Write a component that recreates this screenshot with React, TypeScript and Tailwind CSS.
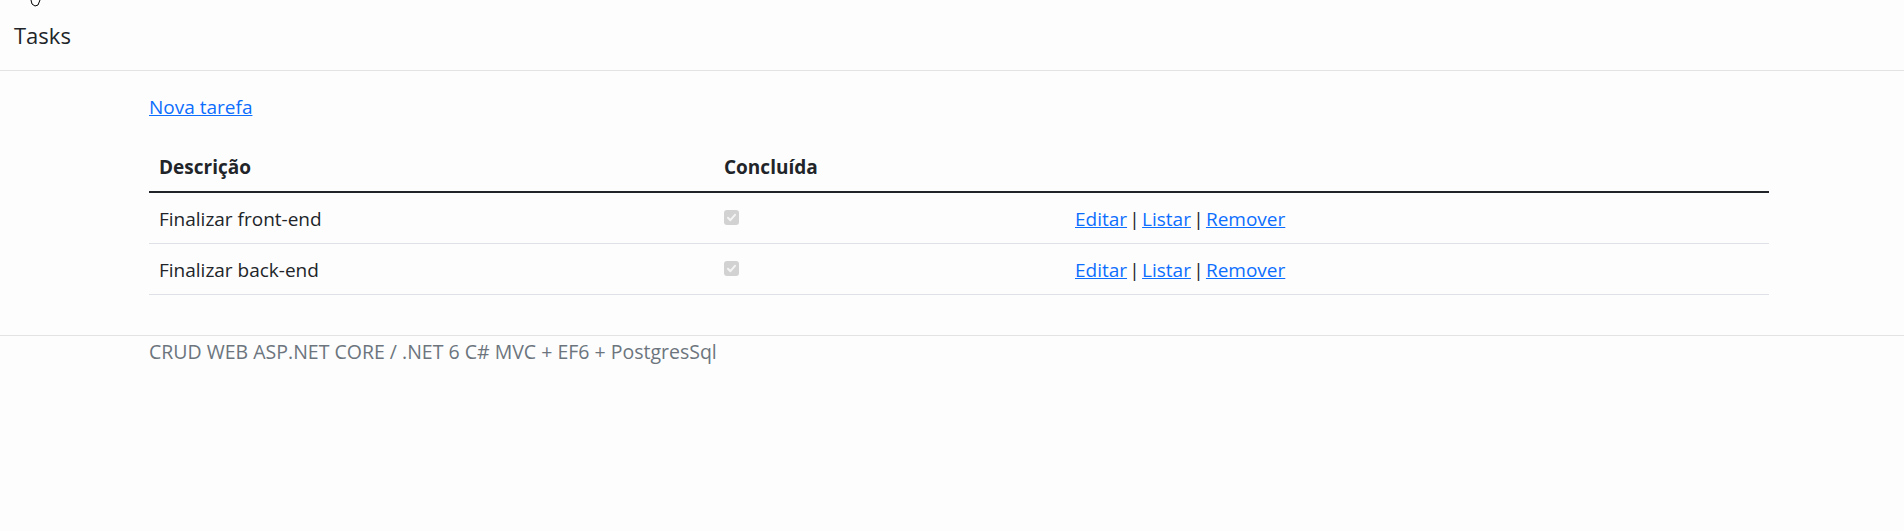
import React from "react";

const font = { fontFamily: '"Segoe UI", "Open Sans", "Noto Sans", sans-serif' };

function Check() {
  return (
    <div className="mt-[6px] flex h-[15px] w-[15px] items-center justify-center rounded-[3px] bg-[#d2d2d2]">
      <svg width="11" height="11" viewBox="0 0 11 11">
        <path d="M2 5.8 L4.4 8.2 L9 2.8" fill="none" stroke="#f4f4f4" strokeWidth="2" strokeLinecap="round" strokeLinejoin="round" />
      </svg>
    </div>
  );
}

function Sep() {
  return <span className="inline-block w-[15px] text-center text-[#212529]">|</span>;
}

function Actions() {
  return (
    <span>
      <a href="#" className="text-[#0d6efd] underline">Editar</a>
      <Sep />
      <a href="#" className="text-[#0d6efd] underline">Listar</a>
      <Sep />
      <a href="#" className="text-[#0d6efd] underline">Remover</a>
    </span>
  );
}

const rows = ["Finalizar front-end", "Finalizar back-end"];

export default function App() {
  return (
    <div className="relative min-h-[531px] bg-[#fdfdfd] text-[19px] leading-[30px] text-[#212529]" style={font}>
      <svg className="absolute left-[28px] top-0" width="16" height="8" viewBox="0 0 16 8">
        <path d="M3 0 L4 4 L7 6 L10 5 L12 0" fill="#fff" stroke="#000" strokeWidth="1" />
      </svg>
      <header className="flex h-[71px] items-center border-b border-[#e3e3e3] pl-[14px]">
        <span className="text-[22px] leading-[30px] text-[#212529]">Tasks</span>
      </header>
      <main className="pl-[149px] pt-[21px] pb-[20px]">
        <div className="w-[1620px]">
          <p className="mb-[19px]">
            <a href="#" className="text-[#0d6efd] underline">Nova tarefa</a>
          </p>
          <div className="mb-[20px]">
            <div className="flex border-b-[2.5px] border-[#212529] font-bold">
              <div className="w-[565px] px-[10px] pt-[11px] pb-[9px]">Descrição</div>
              <div className="w-[351px] px-[10px] pt-[11px] pb-[9px]">Concluída</div>
              <div className="flex-1 px-[10px] pt-[11px] pb-[9px]"></div>
            </div>
            {rows.map((r) => (
              <div key={r} className="flex border-b border-[#dee2e6]">
                <div className="w-[565px] px-[10px] pt-[11px] pb-[9px]">{r}</div>
                <div className="w-[351px] px-[10px] pt-[11px] pb-[9px]"><Check /></div>
                <div className="flex-1 px-[10px] pt-[11px] pb-[9px]"><Actions /></div>
              </div>
            ))}
          </div>
        </div>
      </main>
      <footer className="border-t border-[#e3e3e3] pl-[149px] pt-[1px] text-[19.5px] text-[#6c757d]">
        CRUD WEB ASP.NET CORE / .NET 6 C# MVC + EF6 + PostgresSql
      </footer>
    </div>
  );
}
